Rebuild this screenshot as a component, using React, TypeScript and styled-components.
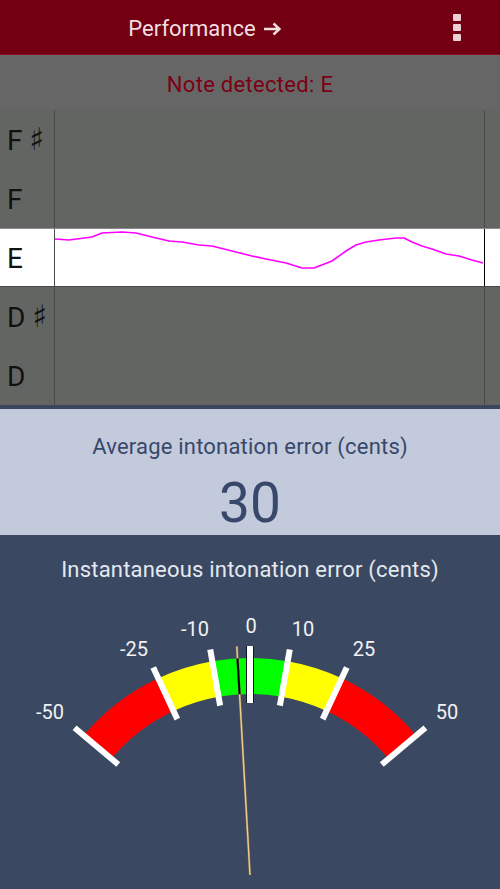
import styled, { createGlobalStyle } from 'styled-components'

const GlobalStyle = createGlobalStyle`
  html, body {
    margin: 0;
    padding: 0;
    background: #3a4862;
  }
  body {
    font-family: Roboto, 'Liberation Sans', sans-serif;
  }
`

const notes = [
  { name: 'F', sharp: true },
  { name: 'F', sharp: false },
  { name: 'E', sharp: false, active: true },
  { name: 'D', sharp: true },
  { name: 'D', sharp: false },
]

// pitch trace, page coordinates
const trace: [number, number][] = [
  [55, 240], [70, 241], [93, 238], [103, 234], [123, 233], [137, 234], [153, 238],
  [170, 242], [183, 243], [200, 246], [213, 247], [233, 252], [253, 257], [267, 260],
  [287, 264], [303, 269], [315, 269], [333, 262], [347, 252], [357, 246], [367, 243],
  [380, 241], [397, 239], [405, 239], [413, 243], [423, 247], [433, 250], [447, 255],
  [460, 257], [473, 261], [484, 264],
]

const CX = 250
const CY = 877

const pt = (deg: number, r: number) => {
  const a = (deg * Math.PI) / 180
  return [CX + r * Math.sin(a), CY - r * Math.cos(a)]
}

const sector = (a1: number, a2: number, r1: number, r2: number) => {
  const [x1, y1] = pt(a1, r2)
  const [x2, y2] = pt(a2, r2)
  const [x3, y3] = pt(a2, r1)
  const [x4, y4] = pt(a1, r1)
  return `M${x1} ${y1} A${r2} ${r2} 0 0 1 ${x2} ${y2} L${x3} ${y3} A${r1} ${r1} 0 0 0 ${x4} ${y4} Z`
}

const bands = [
  { from: -50, to: -25, color: '#ff0000' },
  { from: -25, to: -10, color: '#ffff00' },
  { from: -10, to: 10, color: '#00ff00' },
  { from: 10, to: 25, color: '#ffff00' },
  { from: 25, to: 50, color: '#ff0000' },
]

// scale marks with the centre of their label
const ticks = [
  { value: -50, lx: 50, ly: 714 },
  { value: -25, lx: 134, ly: 651 },
  { value: -10, lx: 195, ly: 631 },
  { value: 0, lx: 251, ly: 628 },
  { value: 10, lx: 303, ly: 631 },
  { value: 25, lx: 364, ly: 651 },
  { value: 50, lx: 447, ly: 714 },
]

const needleAngle = -3.3

const App = () => {
  const [nx, ny] = pt(needleAngle, 229)
  const [bx1, by1] = pt(needleAngle, 181)
  const [bx2, by2] = pt(needleAngle, 217)

  return (
    <Screen>
      <GlobalStyle />
      <Header>
        <Title>
          Performance
          <svg width="19" height="14" viewBox="0 0 19 14">
            <path
              d="M1 7 H16 M10.5 1.5 L16.5 7 L10.5 12.5"
              fill="none"
              stroke="#f2dde0"
              strokeWidth="2.4"
            />
          </svg>
        </Title>
        <MenuButton>
          <Dot />
          <Dot />
          <Dot />
        </MenuButton>
      </Header>
      <NoteBar>Note detected: E</NoteBar>
      <Staff>
        {notes.map((n, i) => (
          <Row key={i} $active={n.active}>
            <Label>
              {n.name}
              {n.sharp && <Sharp>♯</Sharp>}
            </Label>
            <Plot $active={n.active}>
              {n.active && (
                <svg width="429" height="58" viewBox="56 230 429 58">
                  <polyline
                    points={trace.map((p) => p.join(',')).join(' ')}
                    fill="none"
                    stroke="#ff00ff"
                    strokeWidth="1.6"
                    strokeLinejoin="round"
                  />
                </svg>
              )}
            </Plot>
            <Margin />
          </Row>
        ))}
      </Staff>
      <Average>
        <Caption>Average intonation error (cents)</Caption>
        <Value>30</Value>
      </Average>
      <Meter>
        <MeterCaption>Instantaneous intonation error (cents)</MeterCaption>
        <svg width="500" height="300" viewBox="0 589 500 300">
          {bands.map((b) => (
            <path key={b.from} d={sector(b.from, b.to, 181, 217)} fill={b.color} />
          ))}
          {ticks.map((t) => {
            const [x1, y1] = pt(t.value, 172)
            const [x2, y2] = pt(t.value, 229)
            return (
              <g key={t.value}>
                {t.value === 0 && (
                  <line x1={x1} y1={y1} x2={x2} y2={y2} stroke="#101830" strokeWidth="8" />
                )}
                <line x1={x1} y1={y1} x2={x2} y2={y2} stroke="#ffffff" strokeWidth="6" />
                <text
                  x={t.lx}
                  y={t.ly + 7}
                  textAnchor="middle"
                  fill="#f2f2f2"
                  fontSize="20"
                  fontFamily="Roboto, 'Liberation Sans', sans-serif"
                >
                  {t.value}
                </text>
              </g>
            )
          })}
          <line x1={CX} y1={CY} x2={nx} y2={ny} stroke="#7a6a50" strokeWidth="2.4" />
          <line x1={CX} y1={CY} x2={nx} y2={ny} stroke="#f0cc8c" strokeWidth="1.4" />
          <line x1={bx1} y1={by1} x2={bx2} y2={by2} stroke="#000000" strokeWidth="2" />
        </svg>
      </Meter>
    </Screen>
  )
}

const Screen = styled.div`
  width: 500px;
  height: 889px;
  display: flex;
  flex-direction: column;
  overflow: hidden;
  background: #3a4862;
`

const Header = styled.div`
  height: 55px;
  display: flex;
  align-items: center;
  background: #720012;
  border-bottom: 1px solid #8a1020;
  box-sizing: border-box;
`

const Title = styled.div`
  width: 410px;
  display: flex;
  align-items: center;
  justify-content: center;
  gap: 7px;
  font-size: 22px;
  color: #f2dde0;
  padding-top: 2px;

  svg {
    display: block;
    margin-top: 1px;
  }
`

const MenuButton = styled.div`
  flex: 1;
  display: flex;
  flex-direction: column;
  align-items: center;
  gap: 3px;
  padding-left: 4px;
`

const Dot = styled.div`
  width: 8px;
  height: 7px;
  border-radius: 1px;
  background: #ecd0d6;
`

const NoteBar = styled.div`
  height: 55px;
  display: flex;
  align-items: center;
  justify-content: center;
  background: #666666;
  color: #7c0012;
  font-size: 22px;
  letter-spacing: 0.3px;
  padding-top: 3px;
  box-sizing: border-box;
`

const Staff = styled.div`
  display: flex;
  flex-direction: column;
  background: #636562;
  border-bottom: 4px solid #3a4660;
`

const Row = styled.div<{ $active?: boolean }>`
  height: 59px;
  display: flex;
  background: ${(p) => (p.$active ? '#ffffff' : 'transparent')};
  box-sizing: border-box;
  border-top: ${(p) => (p.$active ? '1px solid #8c8c8c' : 'none')};
  border-bottom: ${(p) => (p.$active ? '1px solid #4a4a4a' : 'none')};
`

const Label = styled.div`
  width: 55px;
  box-sizing: border-box;
  padding-left: 7px;
  padding-top: 2px;
  display: flex;
  align-items: center;
  font-size: 28px;
  color: #111111;
  border-right: 1px solid #4a4a4a;
`

const Sharp = styled.span`
  font-family: 'DejaVu Sans', sans-serif;
  font-size: 31px;
  margin-left: 7px;
  margin-top: -3px;
`

const Plot = styled.div<{ $active?: boolean }>`
  width: 430px;
  box-sizing: border-box;
  border-right: 1px solid ${(p) => (p.$active ? '#000000' : '#4a4a4a')};
  display: flex;
  overflow: hidden;

  svg {
    display: block;
  }
`

const Margin = styled.div`
  flex: 1;
`

const Average = styled.div`
  height: 126px;
  display: flex;
  flex-direction: column;
  align-items: center;
  background: #c3cadb;
  color: #38486a;
`

const Caption = styled.div`
  font-size: 22px;
  letter-spacing: 0.2px;
  margin-top: 25px;
`

const Value = styled.div`
  font-size: 55px;
  line-height: 1;
  margin-top: 17px;
`

const MeterCaption = styled.div`
  height: 52px;
  box-sizing: border-box;
  padding-top: 22px;
  text-align: center;
  font-size: 22px;
  letter-spacing: 0.2px;
  color: #e4e8ef;
`

const Meter = styled.div`
  flex: 1;
  display: flex;
  flex-direction: column;

  svg {
    display: block;
  }
`

export default App
